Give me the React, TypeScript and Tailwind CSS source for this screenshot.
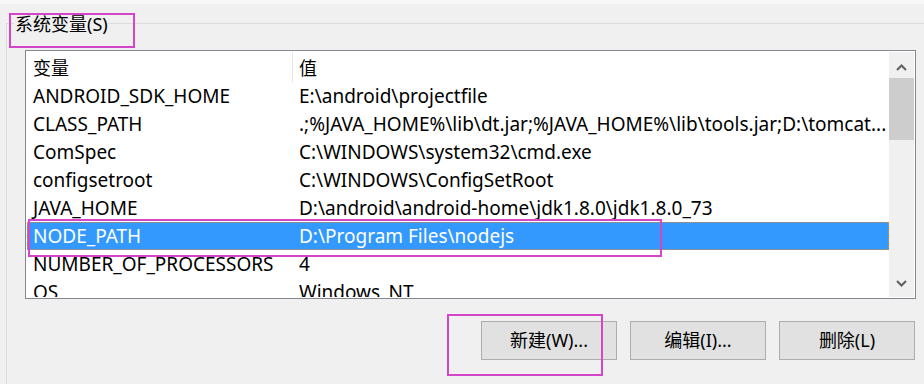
import React from "react";

const rows: [string, string][] = [
  ["ANDROID_SDK_HOME", "E:\\android\\projectfile"],
  ["CLASS_PATH", ".;%JAVA_HOME%\\lib\\dt.jar;%JAVA_HOME%\\lib\\tools.jar;D:\\tomcat..."],
  ["ComSpec", "C:\\WINDOWS\\system32\\cmd.exe"],
  ["configsetroot", "C:\\WINDOWS\\ConfigSetRoot"],
  ["JAVA_HOME", "D:\\android\\android-home\\jdk1.8.0\\jdk1.8.0_73"],
  ["NODE_PATH", "D:\\Program Files\\nodejs"],
  ["NUMBER_OF_PROCESSORS", "4"],
  ["OS", "Windows_NT"],
];

const selected = 5;

function Chevron({ down }: { down?: boolean }) {
  return (
    <svg width="11" height="7" viewBox="0 0 11 7">
      <path
        d={down ? "M1 1 L5.5 5.5 L10 1" : "M1 6 L5.5 1.5 L10 6"}
        stroke="#606060"
        strokeWidth="2"
        fill="none"
      />
    </svg>
  );
}

function Scrollbar() {
  return (
    <div className="flex w-[25px] flex-col bg-[#f0f0f0]">
      <div className="flex h-[26px] justify-center pt-[12px]">
        <Chevron />
      </div>
      <div className="h-[62px] bg-[#cdcdcd]" />
      <div className="flex-1" />
      <div className="flex h-[26px] justify-center pt-[9px]">
        <Chevron down />
      </div>
    </div>
  );
}

function Button({ label }: { label: string }) {
  return (
    <div className="flex h-[39px] w-[136px] items-center justify-center border border-[#adadad] bg-[#e1e1e1]">
      {label}
    </div>
  );
}

export default function App() {
  return (
    <div className="relative h-[384px] w-[924px] overflow-hidden bg-[#f0f0f0] font-['Noto_Sans','Noto_Sans_CJK_SC',sans-serif] text-[18px] text-black">
      <div className="h-[4px] bg-[#f7f7f7]" />

      <div className="relative ml-[6px] mt-[19px] border-l border-t border-[#dcdcdc] pb-[40px]">
        <span className="absolute left-[7px] top-[-12px] bg-[#f0f0f0] px-[1px] leading-[24px]">系统变量(S)</span>

        <div className="ml-[18px] mr-[8px] mt-[26px] flex h-[249px] border border-[#828790] bg-white p-[1px]">
          <div className="flex-1 overflow-hidden">
            <div className="flex h-[30px] items-center">
              <div className="flex h-full w-[266px] items-center border-r border-[#e5e5e5] pl-[6px] pt-[2px]">变量</div>
              <div className="pl-[6px] pt-[2px]">值</div>
            </div>
            {rows.map(([name, value], i) => (
              <div
                key={name}
                className={
                  i === selected
                    ? "flex h-[28px] items-center bg-[#3399ff] text-[19px] text-white outline-1 -outline-offset-1 outline-dotted outline-[#e0882a]"
                    : "flex h-[28px] items-center text-[19px]"
                }
              >
                <div className="w-[266px] whitespace-nowrap pl-[6px]">{name}</div>
                <div className="flex-1 overflow-hidden whitespace-nowrap pl-[6px]">{value}</div>
              </div>
            ))}
          </div>
          <Scrollbar />
        </div>

        <div className="mr-[9px] mt-[22px] flex justify-end gap-[13px]">
          <Button label="新建(W)..." />
          <Button label="编辑(I)..." />
          <Button label="删除(L)" />
        </div>
      </div>

      {/* annotation boxes */}
      <div className="absolute left-[9px] top-[13px] h-[35px] w-[126px] border-2 border-[#d545c8]" />
      <div className="absolute left-[28px] top-[219px] h-[38px] w-[634px] border-2 border-[#d545c8]" />
      <div className="absolute left-[447px] top-[314px] h-[62px] w-[156px] border-2 border-[#d545c8]" />
    </div>
  );
}
